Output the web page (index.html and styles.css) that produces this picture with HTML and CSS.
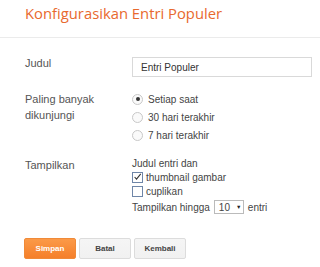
FILE: index.html
```html
<!DOCTYPE html>
<html lang="id">
<head>
    <meta charset="UTF-8">
    <meta name="viewport" content="width=device-width, initial-scale=1.0">
    <title>Konfigurasikan Entri Populer</title>
    <link rel="stylesheet" href="styles.css">
</head>
<body>

    <div class="header">
        <h1>Konfigurasikan Entri Populer</h1>
    </div>

    <div class="form">
        <div class="row row-title">
            <div class="label">Judul</div>
            <div class="field">
                <div class="textbox">Entri Populer</div>
            </div>
        </div>

        <div class="row row-radio">
            <div class="label">Paling banyak<br>dikunjungi</div>
            <div class="field">
                <div class="option"><span class="radio checked"></span>Setiap saat</div>
                <div class="option"><span class="radio"></span>30 hari terakhir</div>
                <div class="option"><span class="radio"></span>7 hari terakhir</div>
            </div>
        </div>

        <div class="row row-show">
            <div class="label">Tampilkan</div>
            <div class="field">
                <div class="line">Judul entri dan</div>
                <div class="line">
                    <span class="check">
                        <svg width="10" height="10" viewBox="0 0 10 10"><path d="M1.8 5 L3.9 7.3 L8.6 1.5" fill="none" stroke="#333" stroke-width="1.2"/></svg>
                    </span>thumbnail gambar
                </div>
                <div class="line"><span class="check"></span>cuplikan</div>
                <div class="line last">Tampilkan hingga <span class="select">10 <span class="arrow">&#9660;</span></span> entri</div>
            </div>
        </div>
    </div>

    <div class="buttons">
        <button class="btn primary">Simpan</button>
        <button class="btn">Batal</button>
        <button class="btn">Kembali</button>
    </div>

</body>
</html>
```

FILE: styles.css
```css
body {
    margin: 0;
    padding: 0;
    background-color: #fff;
    font-family: "Liberation Sans", Arial, sans-serif;
    font-size: 10px;
    color: #444;
}

.header {
    height: 37px;
    border-bottom: 1px solid #ebebeb;
    padding-left: 25px;
}

h1 {
    margin: 0;
    padding-top: 1px;
    font-family: "Open Sans", sans-serif;
    font-weight: normal;
    font-size: 14.8px;
    line-height: 24px;
    color: #e8692e;
}

.form {
    padding: 19px 8px 0 25px;
}

.row {
    display: flex;
}

.label {
    width: 107px;
    color: #555;
    font-size: 11px;
    line-height: 16px;
}

.field {
    flex: 1;
}

.row-title .label {
    margin-top: -2px;
}

.textbox {
    height: 18px;
    border: 1px solid #d9d9d9;
    padding-left: 8px;
    line-height: 19px;
    color: #333;
}

.row-radio {
    margin-top: 13px;
}

.row-radio .label {
    padding-top: 1px;
}

.option {
    display: flex;
    align-items: center;
    height: 18px;
}

.radio {
    width: 9px;
    height: 9px;
    border: 1px solid #c8c8c8;
    border-radius: 50%;
    margin-right: 5px;
    display: flex;
    align-items: center;
    justify-content: center;
    background: #fafafa;
}

.radio.checked::after {
    content: "";
    width: 4px;
    height: 4px;
    border-radius: 50%;
    background: #333;
}

.row-show {
    margin-top: 12px;
}

.row-show .label {
    padding-top: 1px;
}

.line {
    display: flex;
    align-items: center;
    height: 14px;
    white-space: nowrap;
}

.line.last {
    height: 18px;
}

.check {
    width: 9px;
    height: 9px;
    border: 1px solid #6f86a8;
    margin-right: 3px;
    display: inline-flex;
    align-items: center;
    justify-content: center;
}

.check svg {
    display: block;
}

.select {
    display: inline-flex;
    align-items: center;
    height: 12px;
    width: 24px;
    border: 1px solid #bbb;
    padding-left: 4px;
    margin: 0 4px 0 4px;
    gap: 6px;
}

.arrow {
    font-size: 5.5px;
    color: #222;
}

.buttons {
    display: flex;
    gap: 3px;
    padding: 22px 0 0 24px;
}

.btn {
    width: 52px;
    height: 21px;
    padding: 0;
    border: 1px solid #dcdcdc;
    border-radius: 2px;
    background: linear-gradient(#f5f5f5, #f1f1f1);
    color: #444;
    font-family: "Liberation Sans", Arial, sans-serif;
    font-size: 8px;
    font-weight: bold;
}

.btn.primary {
    border-color: #f08a38;
    background: linear-gradient(#fb9a48, #f57f2a);
    color: #fff;
}
```
